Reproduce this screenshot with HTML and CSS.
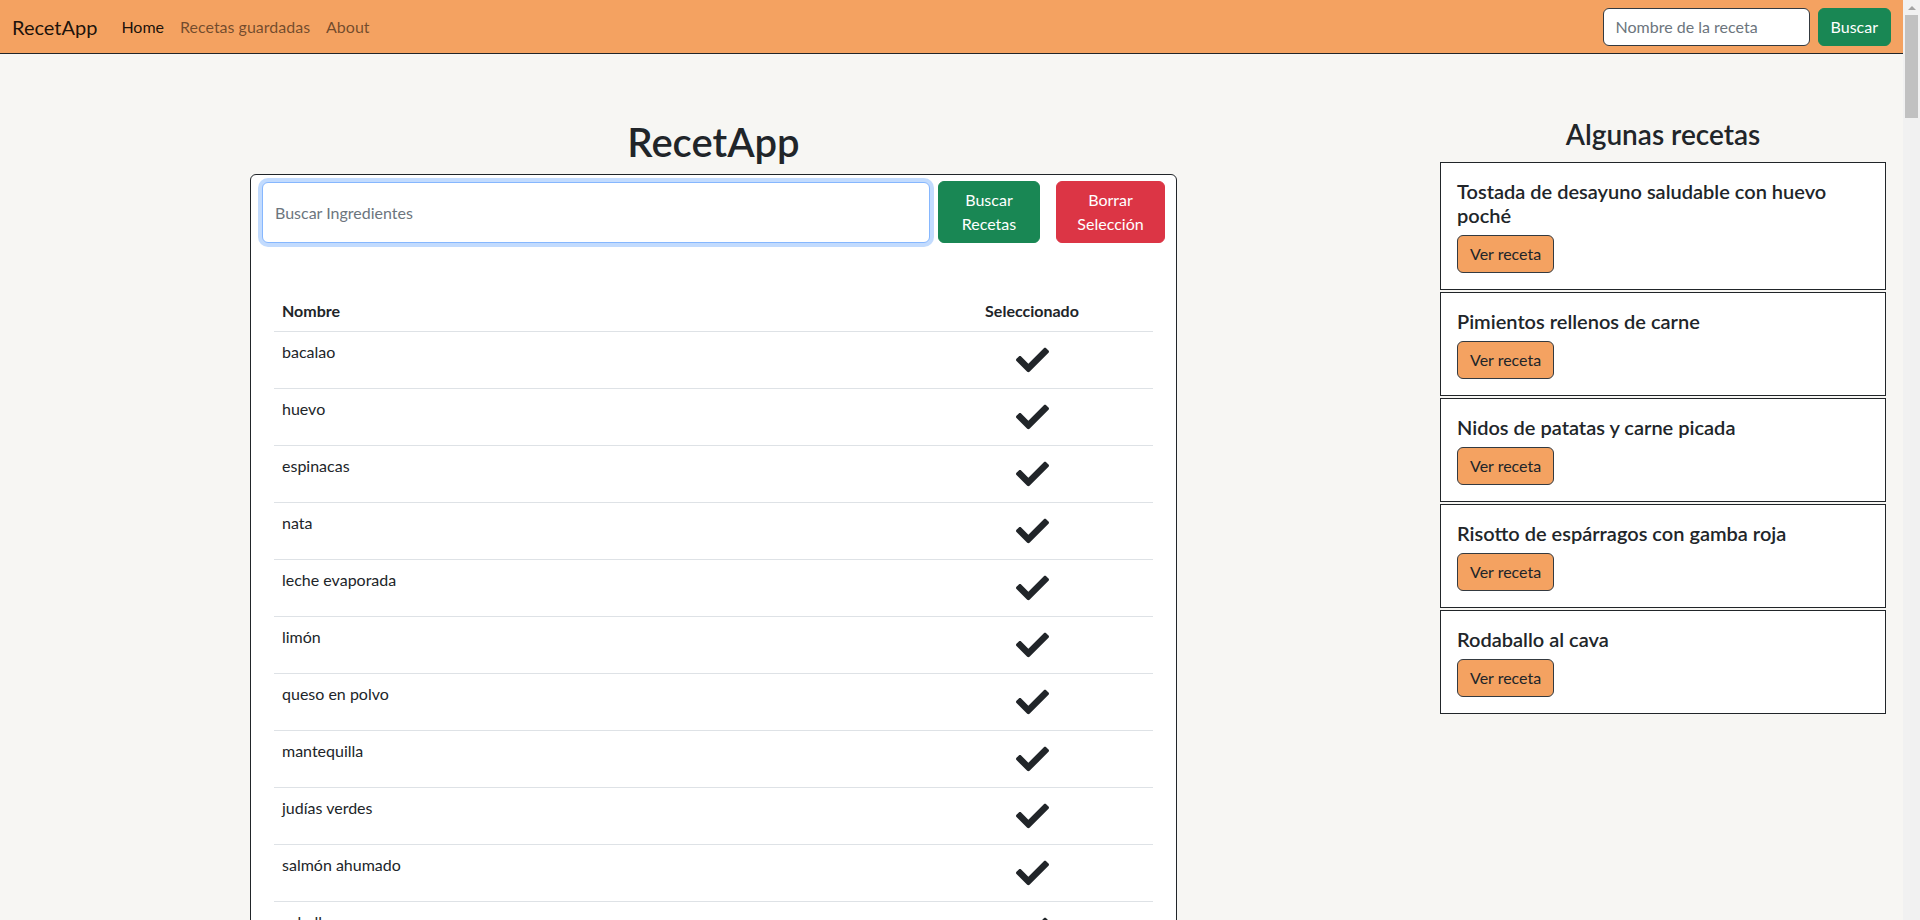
FILE: index.html
```html
<!DOCTYPE html>
<html lang="es">
<head>
<meta charset="utf-8">
<title>RecetApp</title>
<link rel="stylesheet" href="styles.css">
</head>
<body>
<svg class="defs" width="0" height="0" aria-hidden="true">
  <symbol id="chk" viewBox="0 65 512 382"><path d="M173.898 439.404l-166.4-166.4c-9.997-9.997-9.997-26.206 0-36.204l36.203-36.204c9.997-9.998 26.207-9.998 36.204 0L192 312.69 432.095 72.596c9.997-9.997 26.207-9.997 36.204 0l36.203 36.204c9.997 9.997 9.997 26.206 0 36.204l-294.4 294.401c-9.998 9.997-26.207 9.997-36.204-.001z"/></symbol>
</svg>
<div class="page">
  <nav class="navbar">
    <a class="brand" href="#">RecetApp</a>
    <ul class="nav">
      <li><a class="nav-link active" href="#">Home</a></li>
      <li><a class="nav-link" href="#">Recetas guardadas</a></li>
      <li><a class="nav-link" href="#">About</a></li>
    </ul>
    <form class="nav-search">
      <input class="nav-input" type="search" placeholder="Nombre de la receta">
      <button class="btn btn-green" type="button">Buscar</button>
    </form>
  </nav>
  <main class="layout">
    <section class="col-left">
      <h1 class="title">RecetApp</h1>
      <div class="panel">
        <div class="search-row">
          <input class="ing-input" type="text" placeholder="Buscar Ingredientes" autofocus>
          <button class="btn btn-green btn-two" type="button">Buscar Recetas</button>
          <button class="btn btn-red btn-two btn-wide" type="button">Borrar Selección</button>
        </div>
        <table class="ing-table">
          <thead>
            <tr><th class="c-name">Nombre</th><th class="c-sel">Seleccionado</th></tr>
          </thead>
          <tbody>
            <tr><td>bacalao</td><td class="c-sel"><svg class="chk"><use href="#chk"/></svg></td></tr>
            <tr><td>huevo</td><td class="c-sel"><svg class="chk"><use href="#chk"/></svg></td></tr>
            <tr><td>espinacas</td><td class="c-sel"><svg class="chk"><use href="#chk"/></svg></td></tr>
            <tr><td>nata</td><td class="c-sel"><svg class="chk"><use href="#chk"/></svg></td></tr>
            <tr><td>leche evaporada</td><td class="c-sel"><svg class="chk"><use href="#chk"/></svg></td></tr>
            <tr><td>limón</td><td class="c-sel"><svg class="chk"><use href="#chk"/></svg></td></tr>
            <tr><td>queso en polvo</td><td class="c-sel"><svg class="chk"><use href="#chk"/></svg></td></tr>
            <tr><td>mantequilla</td><td class="c-sel"><svg class="chk"><use href="#chk"/></svg></td></tr>
            <tr><td>judías verdes</td><td class="c-sel"><svg class="chk"><use href="#chk"/></svg></td></tr>
            <tr><td>salmón ahumado</td><td class="c-sel"><svg class="chk"><use href="#chk"/></svg></td></tr>
            <tr><td>caballa</td><td class="c-sel"><svg class="chk"><use href="#chk"/></svg></td></tr>
          </tbody>
        </table>
      </div>
    </section>
    <aside class="col-right">
      <h3 class="side-title">Algunas recetas</h3>
      <div class="recipe">
        <h5 class="recipe-title">Tostada de desayuno saludable con huevo poché</h5>
        <button class="btn btn-orange" type="button">Ver receta</button>
      </div>
      <div class="recipe">
        <h5 class="recipe-title">Pimientos rellenos de carne</h5>
        <button class="btn btn-orange" type="button">Ver receta</button>
      </div>
      <div class="recipe">
        <h5 class="recipe-title">Nidos de patatas y carne picada</h5>
        <button class="btn btn-orange" type="button">Ver receta</button>
      </div>
      <div class="recipe">
        <h5 class="recipe-title">Risotto de espárragos con gamba roja</h5>
        <button class="btn btn-orange" type="button">Ver receta</button>
      </div>
      <div class="recipe">
        <h5 class="recipe-title">Rodaballo al cava</h5>
        <button class="btn btn-orange" type="button">Ver receta</button>
      </div>
    </aside>
  </main>
</div>
<div class="vscroll" aria-hidden="true">
  <div class="vscroll-arrow"><span class="vscroll-tri"></span></div>
  <div class="vscroll-thumb"></div>
</div>
</body>
</html>
```

FILE: styles.css
```css
* { box-sizing: border-box; }

html { background: #f7f6f3; }

body {
  margin: 0;
  display: flex;
  align-items: flex-start;
  font-family: Lato, "Noto Sans", sans-serif;
  font-size: 16px;
  line-height: 1.5;
  color: #212529;
  background: #f7f6f3;
}

.defs { position: absolute; width: 0; height: 0; overflow: hidden; }

.page { flex: 1; min-width: 0; }

/* drawn scrollbar */
.vscroll {
  flex: none;
  width: 17px;
  height: 100vh;
  position: sticky;
  top: 0;
  background: #f1f1f1;
  display: flex;
  flex-direction: column;
}
.vscroll-arrow {
  height: 15px;
  display: flex;
  align-items: center;
  justify-content: center;
}
.vscroll-tri {
  width: 0;
  height: 0;
  border-left: 4px solid transparent;
  border-right: 4px solid transparent;
  border-bottom: 4px solid #a3a3a3;
}
.vscroll-thumb {
  height: 103px;
  margin: 0 2px;
  background: #c1c1c1;
}

/* navbar */
.navbar {
  display: flex;
  align-items: center;
  height: 54px;
  padding: 0 12px;
  background: #f4a261;
  border-bottom: 1px solid #212529;
}
.brand {
  font-size: 20px;
  line-height: 30px;
  color: rgba(0, 0, 0, 0.9);
  text-decoration: none;
  margin-right: 16px;
}
.nav {
  display: flex;
  list-style: none;
  margin: 0;
  padding: 0;
  flex: 1;
}
.nav-link {
  display: block;
  padding: 8px;
  color: rgba(0, 0, 0, 0.55);
  text-decoration: none;
}
.nav-link.active { color: rgba(0, 0, 0, 0.9); }

.nav-search { display: flex; align-items: center; }
.nav-input {
  width: 207px;
  height: 38px;
  padding: 6px 12px;
  margin-right: 8px;
  font: inherit;
  font-size: 16px;
  color: #212529;
  background: #fff;
  border: 1px solid #343a40;
  border-radius: 6px;
  outline: none;
}
.nav-input::placeholder, .ing-input::placeholder { color: #6c757d; opacity: 1; }

/* buttons */
.btn {
  font: inherit;
  line-height: 24px;
  padding: 6px 12px;
  border: 1px solid transparent;
  border-radius: 6px;
  cursor: pointer;
  text-align: center;
}
.btn-green { background: #198754; border-color: #198754; color: #fff; }
.btn-red { background: #dc3545; border-color: #dc3545; color: #fff; }
.btn-orange { background: #f4a261; border-color: #343a40; color: #212529; }

/* layout */
.layout {
  display: grid;
  grid-template-columns: 927px 446px;
  column-gap: 263px;
  padding: 64px 0 0 250px;
  align-items: start;
}

.title {
  margin: 0 0 8px;
  font-size: 40px;
  font-weight: 600;
  line-height: 1.2;
  text-align: center;
}

.panel {
  background: #fff;
  border: 1px solid #212529;
  border-radius: 6px;
  padding: 6px 11px 24px;
}

.search-row { display: flex; align-items: stretch; }
.ing-input {
  flex: 1;
  min-width: 0;
  margin: 1px 8px 0 0;
  padding: 6px 12px;
  font: inherit;
  color: #212529;
  background: #fff;
  border: 1px solid #86b7fe;
  border-radius: 6px;
  box-shadow: 0 0 0 4px rgba(13, 110, 253, 0.25);
  outline: none;
  caret-color: #212529;
}
.btn-two { width: 102px; }
.btn-wide { width: 109px; margin-left: 16px; }

.ing-table {
  width: calc(100% - 24px);
  margin: 48px 12px 0;
  border-collapse: collapse;
}
.ing-table th, .ing-table td {
  padding: 8px;
  border-bottom: 1px solid #dee2e6;
  text-align: left;
  vertical-align: top;
  line-height: 24px;
}
.ing-table th { font-weight: 700; }
.ing-table .c-sel { width: 242px; text-align: center; }
.chk {
  display: block;
  width: 33px;
  height: 40px;
  margin: 0 auto;
  fill: #212529;
}

/* right column */
.side-title {
  margin: 0 0 10px;
  font-size: 28px;
  font-weight: 600;
  line-height: 1.2;
  text-align: center;
}
.recipe {
  background: #fff;
  border: 1px solid #212529;
  padding: 16px;
  margin-bottom: 2px;
}
.recipe-title {
  margin: 0 0 8px;
  font-size: 20px;
  font-weight: 600;
  line-height: 1.2;
}
```
